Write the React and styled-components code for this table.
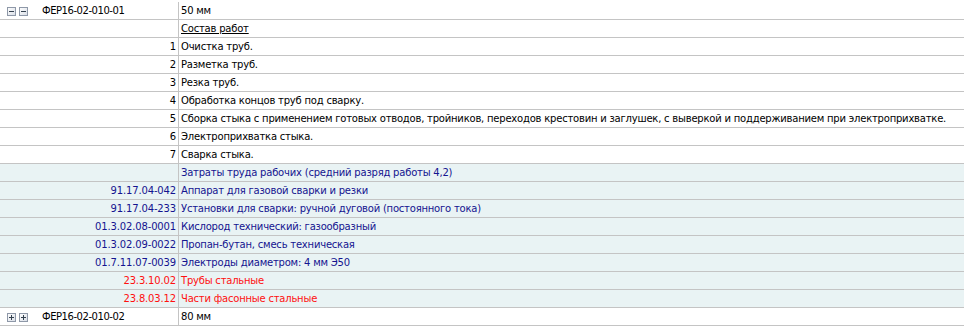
import React from "react";
import styled, { createGlobalStyle } from "styled-components";

const Global = createGlobalStyle`
  html, body { margin: 0; padding: 0; background: #ffffff; }
  body { font-family: "DejaVu Sans", Tahoma, sans-serif; font-size: 10px; letter-spacing: -0.15px; }
`;

const Grid = styled.div`
  width: 964px;
  padding-top: 2px;
  background: #ffffff;
`;

const Row = styled.div`
  display: grid;
  grid-template-columns: 179px 1fr;
  height: 18px;
  box-sizing: border-box;
  border-bottom: 1px solid #c4c4c4;
  background: ${(p) => (p.$shaded ? "#e9f3f4" : "#ffffff")};
  color: ${(p) => (p.$tone === "blue" ? "#141490" : p.$tone === "red" ? "#ff1010" : "#000000")};
`;

const KeyCell = styled.div`
  box-sizing: border-box;
  border-right: 1px solid #c4c4c4;
  display: flex;
  align-items: center;
  justify-content: ${(p) => (p.$tree ? "flex-start" : "flex-end")};
  padding: ${(p) => (p.$tree ? "0 0 0 7px" : "0 2px 0 0")};
  white-space: nowrap;
  overflow: hidden;
`;

const TextCell = styled.div`
  display: flex;
  align-items: center;
  padding-left: 2px;
  white-space: nowrap;
  overflow: hidden;
  letter-spacing: -0.21px;
  text-decoration: ${(p) => (p.$underline ? "underline" : "none")};
`;

const Toggles = styled.span`
  display: flex;
  gap: 3px;
  margin-right: 14px;
`;

const ToggleBox = styled.span`
  width: 9px;
  height: 9px;
  display: block;
  margin-top: 1px;
`;

const Code = styled.span`
  letter-spacing: ${(p) => (p.$tree ? "-0.45px" : "-0.15px")};
`;

function Toggle({ open }) {
  return (
    <ToggleBox>
      <svg width="9" height="9" viewBox="0 0 9 9">
        <defs>
          <linearGradient id="tg" x1="0" y1="0" x2="1" y2="1">
            <stop offset="0" stopColor="#ffffff" />
            <stop offset="1" stopColor="#d8dde6" />
          </linearGradient>
        </defs>
        <rect x="0.5" y="0.5" width="8" height="8" fill="url(#tg)" stroke="#8e98a8" />
        <rect x="2" y="4" width="5" height="1" fill="#33404e" />
        {!open && <rect x="4" y="2" width="1" height="5" fill="#33404e" />}
      </svg>
    </ToggleBox>
  );
}

const rows = [
  { tree: true, open: true, key: "ФЕР16-02-010-01", text: "50 мм" },
  { key: "", text: "Состав работ", underline: true },
  { key: "1", text: "Очистка труб." },
  { key: "2", text: "Разметка труб." },
  { key: "3", text: "Резка труб." },
  { key: "4", text: "Обработка концов труб под сварку." },
  { key: "5", text: "Сборка стыка с применением готовых отводов, тройников, переходов крестовин и заглушек, с выверкой и поддерживанием при электроприхватке." },
  { key: "6", text: "Электроприхватка стыка." },
  { key: "7", text: "Сварка стыка." },
  { key: "", text: "Затраты труда рабочих (средний разряд работы 4,2)", shaded: true, tone: "blue" },
  { key: "91.17.04-042", text: "Аппарат для газовой сварки и резки", shaded: true, tone: "blue" },
  { key: "91.17.04-233", text: "Установки для сварки: ручной дуговой (постоянного тока)", shaded: true, tone: "blue" },
  { key: "01.3.02.08-0001", text: "Кислород технический: газообразный", shaded: true, tone: "blue" },
  { key: "01.3.02.09-0022", text: "Пропан-бутан, смесь техническая", shaded: true, tone: "blue" },
  { key: "01.7.11.07-0039", text: "Электроды диаметром: 4 мм Э50", shaded: true, tone: "blue" },
  { key: "23.3.10.02", text: "Трубы стальные", shaded: true, tone: "red" },
  { key: "23.8.03.12", text: "Части фасонные стальные", shaded: true, tone: "red" },
  { tree: true, open: false, key: "ФЕР16-02-010-02", text: "80 мм" },
];

export default function App() {
  return (
    <>
      <Global />
      <Grid>
        {rows.map((r, i) => (
          <Row key={i} $shaded={r.shaded} $tone={r.tone}>
            <KeyCell $tree={r.tree}>
              {r.tree && (
                <Toggles>
                  <Toggle open={r.open} />
                  <Toggle open={r.open} />
                </Toggles>
              )}
              <Code $tree={r.tree}>{r.key}</Code>
            </KeyCell>
            <TextCell $underline={r.underline}>{r.text}</TextCell>
          </Row>
        ))}
      </Grid>
    </>
  );
}
